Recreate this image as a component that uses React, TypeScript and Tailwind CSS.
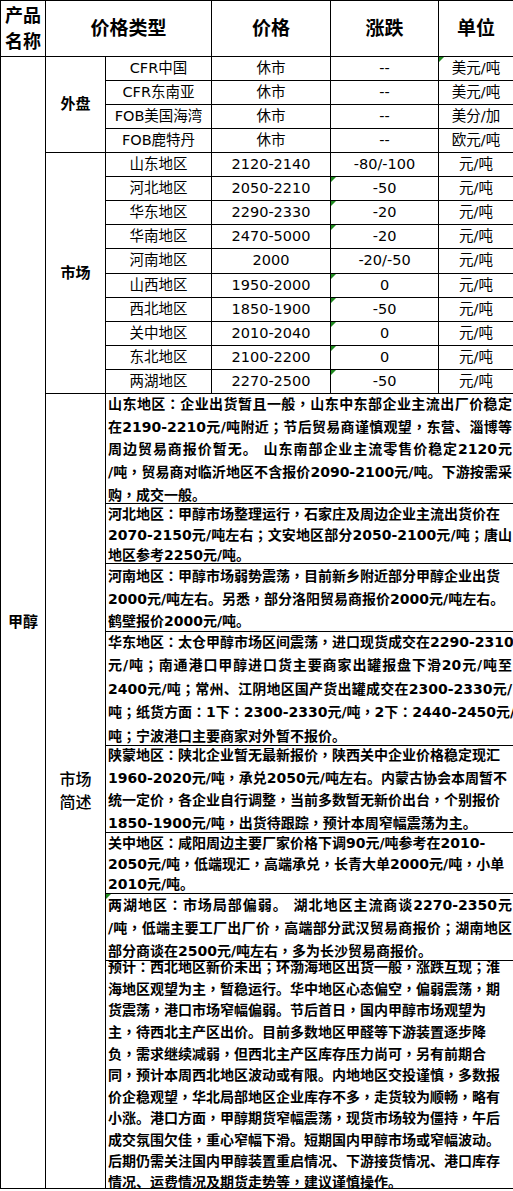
import React from "react";

const font = { fontFamily: '"DejaVu Sans", "Noto Sans CJK SC", sans-serif' };

const waipan = [
  { name: "CFR中国", price: "休市", chg: "--", unit: "美元/吨", unitMark: true },
  { name: "CFR东南亚", price: "休市", chg: "--", unit: "美元/吨", unitMark: false },
  { name: "FOB美国海湾", price: "休市", chg: "--", unit: "美分/加", unitMark: false },
  { name: "FOB鹿特丹", price: "休市", chg: "--", unit: "欧元/吨", unitMark: false },
];

const shichang = [
  { name: "山东地区", price: "2120-2140", chg: "-80/-100", mark: false, tall: false },
  { name: "河北地区", price: "2050-2210", chg: "-50", mark: true, tall: false },
  { name: "华东地区", price: "2290-2330", chg: "-20", mark: true, tall: false },
  { name: "华南地区", price: "2470-5000", chg: "-20", mark: true, tall: false },
  { name: "河南地区", price: "2000", chg: "-20/-50", mark: false, tall: true },
  { name: "山西地区", price: "1950-2000", chg: "0", mark: true, tall: false },
  { name: "西北地区", price: "1850-1900", chg: "-50", mark: true, tall: false },
  { name: "关中地区", price: "2010-2040", chg: "0", mark: true, tall: false },
  { name: "东北地区", price: "2100-2200", chg: "0", mark: true, tall: false },
  { name: "两湖地区", price: "2270-2500", chg: "-50", mark: true, tall: false },
];

// [text, justified]
type Line = [string, boolean];
const notes: { h: string; lh: string; mark?: boolean; lines: Line[] }[] = [
  {
    h: "h-[109px]",
    lh: "leading-[22px]",
    lines: [
      ["山东地区：企业出货暂且一般，山东中东部企业主流出厂价稳定", true],
      ["在2190-2210元/吨附近；节后贸易商谨慎观望，东营、淄博等", true],
      ["周边贸易商报价暂无。 山东南部企业主流零售价稳定2120元", true],
      ["/吨，贸易商对临沂地区不含报价2090-2100元/吨。下游按需采", true],
      ["购，成交一般。", false],
    ],
  },
  {
    h: "h-[59px]",
    lh: "leading-[20px]",
    lines: [
      ["河北地区：甲醇市场整理运行，石家庄及周边企业主流出货价在", false],
      ["2070-2150元/吨左右；文安地区部分2050-2100元/吨；唐山", true],
      ["地区参考2250元/吨。", false],
    ],
  },
  {
    h: "h-[67px]",
    lh: "leading-[22px]",
    lines: [
      ["河南地区：甲醇市场弱势震荡，目前新乡附近部分甲醇企业出货", false],
      ["2000元/吨左右。另悉，部分洛阳贸易商报价2000元/吨左右。", false],
      ["鹤壁报价2000元/吨。", false],
    ],
  },
  {
    h: "h-[113px]",
    lh: "leading-[22.5px]",
    lines: [
      ["华东地区：太仓甲醇市场区间震荡，进口现货成交在2290-2310", true],
      ["元/吨；南通港口甲醇进口货主要商家出罐报盘下滑20元/吨至", true],
      ["2400元/吨；常州、江阴地区国产货出罐成交在2300-2330元/", true],
      ["吨；纸货方面：1下：2300-2330元/吨，2下：2440-2450元/", true],
      ["吨；宁波港口主要商家对外暂不报价。", false],
    ],
  },
  {
    h: "h-[86px]",
    lh: "leading-[21.5px]",
    lines: [
      ["陕蒙地区：陕北企业暂无最新报价，陕西关中企业价格稳定现汇", false],
      ["1960-2020元/吨，承兑2050元/吨左右。内蒙古协会本周暂不", false],
      ["统一定价，各企业自行调整，当前多数暂无新价出台，个别报价", false],
      ["1850-1900元/吨，出货待跟踪，预计本周窄幅震荡为主。", false],
    ],
  },
  {
    h: "h-[60px]",
    lh: "leading-[20px]",
    lines: [
      ["关中地区：咸阳周边主要厂家价格下调90元/吨参考在2010-", false],
      ["2050元/吨，低端现汇，高端承兑，长青大单2000元/吨，小单", false],
      ["2010元/吨。", false],
    ],
  },
  {
    h: "h-[66px]",
    lh: "leading-[22px]",
    mark: true,
    lines: [
      ["两湖地区：市场局部偏弱。 湖北地区主流商谈2270-2350元", true],
      ["/吨，低端主要工厂出厂价，高端部分武汉贸易商报价；湖南地区", true],
      ["部分商谈在2500元/吨左右，多为长沙贸易商报价。", false],
    ],
  },
  {
    h: "h-[227px]",
    lh: "leading-[20.6px]",
    lines: [
      ["预计：西北地区新价未出；环渤海地区出货一般，涨跌互现；淮", false],
      ["海地区观望为主，暂稳运行。华中地区心态偏空，偏弱震荡，期", false],
      ["货震荡，港口市场窄幅偏弱。节后首日，国内甲醇市场观望为", false],
      ["主，待西北主产区出价。目前多数地区甲醛等下游装置逐步降", false],
      ["负，需求继续减弱，但西北主产区库存压力尚可，另有前期合", false],
      ["同，预计本周西北地区波动或有限。内地地区交投谨慎，多数报", false],
      ["价企稳观望，华北局部地区企业库存不多，走货较为顺畅，略有", false],
      ["小涨。港口方面，甲醇期货窄幅震荡，现货市场较为僵持，午后", false],
      ["成交氛围欠佳，重心窄幅下滑。短期国内甲醇市场或窄幅波动。", false],
      ["后期仍需关注国内甲醇装置重启情况、下游接货情况、港口库存", false],
      ["情况、运费情况及期货走势等，建议谨慎操作。", false],
    ],
  },
];

// comma / colon / semicolon sit centred in the original, like the TC glyphs
function Punct({ text }: { text: string }) {
  const parts = text.split(/([，：；])/);
  return (
    <>
      {parts.map((p, i) =>
        /^[，：；]$/.test(p) ? (
          <span key={i} className="font-['Noto_Sans_CJK_TC']">
            {p}
          </span>
        ) : (
          <React.Fragment key={i}>{p}</React.Fragment>
        )
      )}
    </>
  );
}

function Mark() {
  return (
    <span className="absolute left-0 top-0 w-0 h-0 border-t-[5px] border-r-[5px] border-t-[#1f8a1f] border-r-transparent" />
  );
}

const td = "border border-black p-0 text-center align-middle";

function App() {
  return (
    <div className="bg-white w-[513px] h-[1191px] text-black" style={font}>
      <table className="table-fixed border-collapse w-[513px]">
        <colgroup>
          <col className="w-[45px]" />
          <col className="w-[60px]" />
          <col className="w-[106px]" />
          <col className="w-[119px]" />
          <col className="w-[108px]" />
          <col className="w-[75px]" />
        </colgroup>
        <tbody>
          <tr className="h-[56px]">
            <td className={td + " font-bold text-[18px] leading-[26px]"}>
              产品
              <br />
              名称
            </td>
            <td colSpan={2} className={td + " font-bold text-[19px]"}>
              价格类型
            </td>
            <td className={td + " font-bold text-[19px]"}>价格</td>
            <td className={td + " font-bold text-[19px]"}>涨跌</td>
            <td className={td + " font-bold text-[19px]"}>单位</td>
          </tr>

          {waipan.map((r, i) => (
            <tr key={r.name} className="h-[24px] text-[14.5px]">
              {i === 0 && (
                <td rowSpan={22} className={td + " font-bold text-[15px]"}>
                  甲醇
                </td>
              )}
              {i === 0 && (
                <td rowSpan={4} className={td + " font-bold text-[15px]"}>
                  外盘
                </td>
              )}
              <td className={td}>{r.name}</td>
              <td className={td}>{r.price}</td>
              <td className={td}>{r.chg}</td>
              <td className={td + " relative"}>
                {r.unitMark && <Mark />}
                {r.unit}
              </td>
            </tr>
          ))}

          {shichang.map((r, i) => (
            <tr key={r.name} className={(r.tall ? "h-[25px]" : "h-[24px]") + " text-[14.5px]"}>
              {i === 0 && (
                <td rowSpan={10} className={td + " font-bold text-[15px]"}>
                  市场
                </td>
              )}
              <td className={td}>{r.name}</td>
              <td className={td}>{r.price}</td>
              <td className={td + " relative"}>
                {r.mark && <Mark />}
                {r.chg}
              </td>
              <td className={td}>元/吨</td>
            </tr>
          ))}

          {notes.map((n, i) => (
            <tr key={i}>
              {i === 0 && (
                <td rowSpan={8} className={td + " font-medium text-[16px] leading-[23px]"}>
                  市场
                  <br />
                  简述
                </td>
              )}
              <td colSpan={4} className="border border-black p-0 relative">
                {n.mark && <Mark />}
                <div
                  className={
                    n.h +
                    " " +
                    n.lh +
                    " flex flex-col justify-center pl-[2px] pr-[1px] font-bold text-[14px] whitespace-nowrap"
                  }
                >
                  {n.lines.map(([t, j], k) => (
                    <div key={k} className={j ? "text-justify [text-align-last:justify]" : "text-left"}>
                      <Punct text={t} />
                    </div>
                  ))}
                </div>
              </td>
            </tr>
          ))}
        </tbody>
      </table>
    </div>
  );
}

export default App;
